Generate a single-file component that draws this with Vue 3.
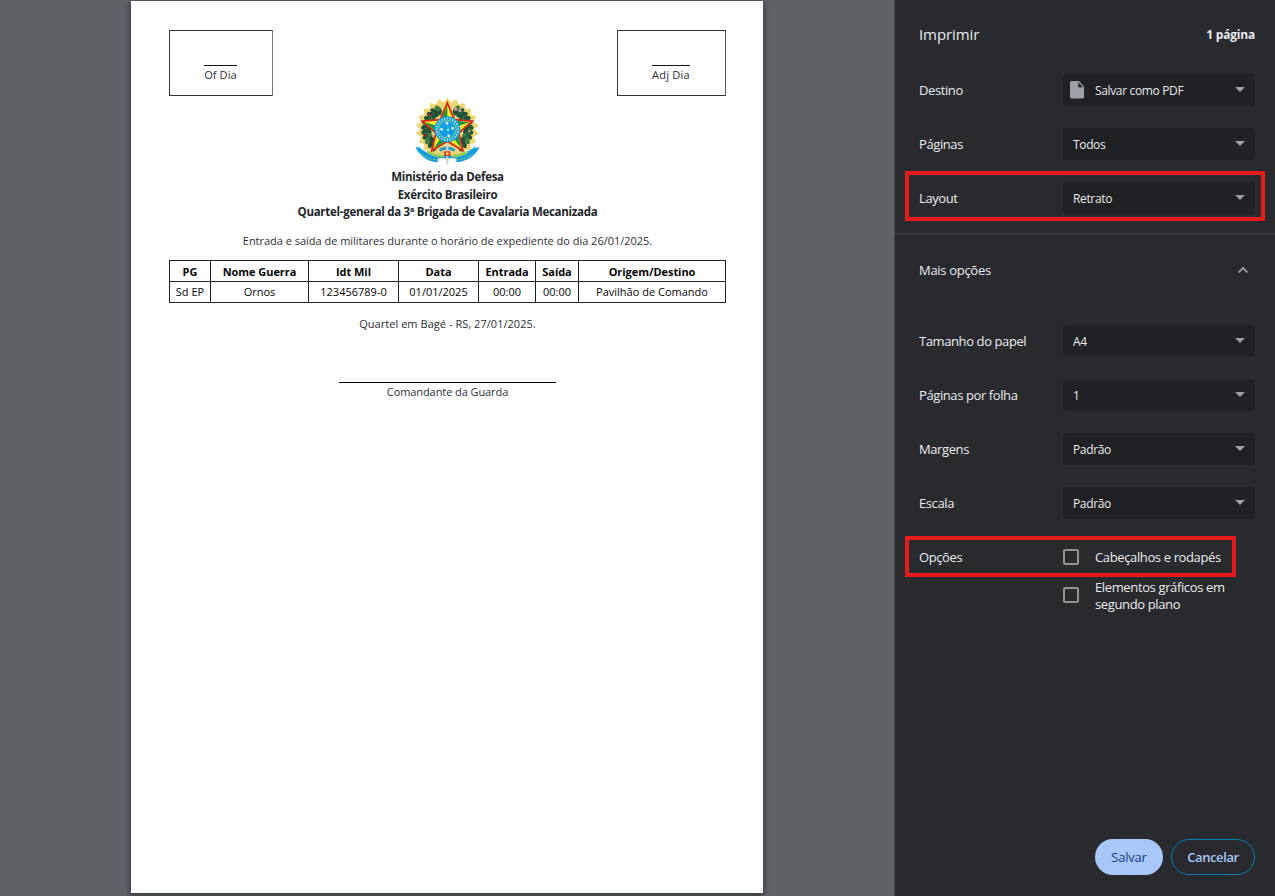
<script setup>
const topSettings = [
  { label: 'Destino', value: 'Salvar como PDF', icon: true },
  { label: 'Páginas', value: 'Todos' },
  { label: 'Layout', value: 'Retrato', marked: true },
]
const moreSettings = [
  { label: 'Tamanho do papel', value: 'A4' },
  { label: 'Páginas por folha', value: '1' },
  { label: 'Margens', value: 'Padrão' },
  { label: 'Escala', value: 'Padrão' },
]
const headers = ['PG', 'Nome Guerra', 'Idt Mil', 'Data', 'Entrada', 'Saída', 'Origem/Destino']
const cells = ['Sd EP', 'Ornos', '123456789-0', '01/01/2025', '00:00', '00:00', 'Pavilhão de Comando']

const point = (r, deg) => {
  const a = (deg * Math.PI) / 180
  return `${(130 + r * Math.sin(a)).toFixed(1)},${(115 - r * Math.cos(a)).toFixed(1)}`
}
const burst = Array.from({ length: 44 }, (_, i) => point(i % 2 ? 82 : 95, (i * 360) / 44)).join(' ')
const star = Array.from({ length: 10 }, (_, i) => point(i % 2 ? 36 : 79, i * 36)).join(' ')
const greenFacets = [0, 1, 2, 3, 4].map((i) => `130,115 ${point(70, i * 72)} ${point(33, i * 72 - 36)}`)
const leaves = []
for (let i = 0; i < 11; i++) {
  const a = 24 + i * 12
  for (const side of [-1, 1]) {
    for (const r of [57, 69]) {
      const t = (a * Math.PI) / 180
      leaves.push({
        x: 130 + side * r * Math.sin(t),
        y: 115 - r * Math.cos(t),
        rot: side * (a + (r === 57 ? -35 : 35)),
        light: (i + (r === 57 ? 1 : 0)) % 4 === 0,
      })
    }
  }
}
const dots = Array.from({ length: 24 }, (_, i) => point(32.5, i * 15).split(','))
</script>

<template>
  <div class="dialog">
    <main class="preview">
      <article class="page">
        <div class="stamps">
          <div class="stamp"><span class="stamp-line">Of Dia</span></div>
          <div class="stamp adj"><span class="stamp-line">Adj Dia</span></div>
        </div>
        <svg class="emblem" viewBox="30 18 204 204">
          <polygon :points="burst" fill="#f0d673" />
          <ellipse
            v-for="(l, i) in leaves" :key="i" :cx="l.x" :cy="l.y" rx="6.5" ry="10.5"
            :transform="`rotate(${l.rot} ${l.x} ${l.y})`"
            :fill="l.light ? '#3c7a42' : '#1b5238'"
          />
          <g fill="#8b2b3c">
            <circle cx="78" cy="71" r="5" /><circle cx="63" cy="132" r="5" /><circle cx="89" cy="162" r="4" />
          </g>
          <g fill="#c7a090">
            <circle cx="154" cy="53" r="6" /><circle cx="168" cy="59" r="5" /><circle cx="196" cy="120" r="4" />
          </g>
          <polygon :points="star" fill="#ffec1c" stroke="#d3271f" stroke-width="5.5" />
          <polygon v-for="(f, i) in greenFacets" :key="'g' + i" :points="f" fill="#159447" />
          <path d="M34 167 45 171 42 164C59 187 94 194 129 193C168 192 201 181 216 164L213 172 226 168C218 190 193 211 157 214L158 202H101L101 214C66 211 44 190 34 167Z" fill="#0d9de4" />
          <path d="M105 173Q129 160 154 173L151 182Q130 171 108 182Z" fill="#2d9ec9" />
          <path d="M127 156h6v65h-6z" fill="#cfd2d8" />
          <path d="M121 181h18v14h-18z" fill="#cf2b29" />
          <path d="M126 184h8v8h-8z" fill="#f8d43c" />
          <path d="M68 181Q94 196 119 195M141 195Q170 195 190 182" fill="none" stroke="#a8d55b" stroke-width="9" />
          <path d="M71 184Q94 197 119 197M141 197Q170 196 187 185" fill="none" stroke="#3a9c72" stroke-width="3" stroke-dasharray="3 3" />
          <path d="M50 185Q64 202 96 207M163 207Q190 202 207 187" fill="none" stroke="#9fd36c" stroke-width="3" stroke-dasharray="6 3" />
          <circle cx="130" cy="115" r="39" fill="#159fda" />
          <circle cx="130" cy="115" r="26.5" fill="#10a0e8" stroke="#9bcf80" stroke-width="3" />
          <circle v-for="(d, i) in dots" :key="'d' + i" :cx="d[0]" :cy="d[1]" r="2.4" fill="#e5f8ff" />
          <g fill="#fff">
            <circle cx="129" cy="97" r="3.8" /><circle cx="113" cy="115" r="3.8" />
            <circle cx="146" cy="112" r="3.8" /><circle cx="132" cy="116" r="3" /><circle cx="134" cy="134" r="3.8" />
          </g>
        </svg>
        <div class="heading">
          <div>Ministério da Defesa</div>
          <div>Exército Brasileiro</div>
          <div>Quartel-general da 3ª Brigada de Cavalaria Mecanizada</div>
        </div>
        <div class="intro">Entrada e saída de militares durante o horário de expediente do dia 26/01/2025.</div>
        <div class="grid">
          <div v-for="h in headers" :key="h" class="cell head">{{ h }}</div>
          <div v-for="(c, i) in cells" :key="i" class="cell">{{ c }}</div>
        </div>
        <div class="place">Quartel em Bagé - RS, 27/01/2025.</div>
        <div class="signature">Comandante da Guarda</div>
      </article>
    </main>

    <aside class="sidebar">
      <header class="top"><span class="title">Imprimir</span><span class="count">1 página</span></header>
      <section class="settings first">
        <div v-for="s in topSettings" :key="s.label" class="row" :class="{ marked: s.marked }">
          <span class="label">{{ s.label }}</span>
          <div class="select" :class="{ wide: s.icon }">
            <svg v-if="s.icon" class="file" viewBox="0 0 14 18">
              <path d="M2 0h7l5 5.500V16a1.600 1.600 0 0 1-1.600 1.600H1.600A1.600 1.600 0 0 1 0 16V1.600A1.600 1.600 0 0 1 1.600 0Z" fill="#9aa0a6" />
              <path d="M8.3 1.3v5h4.800Z" fill="#202124" />
            </svg>
            <span>{{ s.value }}</span>
            <svg class="arrow" viewBox="0 0 10 5"><path d="M0 0h10L5 5Z" fill="#9aa0a6" /></svg>
          </div>
        </div>
      </section>
      <div class="more">
        <span>Mais opções</span>
        <svg viewBox="0 0 12 8"><path d="M1.5 6.5 6 2l4.500 4.500" fill="none" stroke="#a1a5a9" stroke-width="1.6" /></svg>
      </div>
      <section class="settings">
        <div v-for="s in moreSettings" :key="s.label" class="row">
          <span class="label">{{ s.label }}</span>
          <div class="select">
            <span>{{ s.value }}</span>
            <svg class="arrow" viewBox="0 0 10 5"><path d="M0 0h10L5 5Z" fill="#9aa0a6" /></svg>
          </div>
        </div>
      </section>
      <div class="row options">
        <span class="label">Opções</span><i class="check"></i><span class="option">Cabeçalhos e rodapés</span>
      </div>
      <div class="row second">
        <i class="check"></i><span class="option">Elementos gráficos em<br />segundo plano</span>
      </div>
      <footer class="actions">
        <button class="save">Salvar</button>
        <button class="cancel">Cancelar</button>
      </footer>
    </aside>
  </div>
</template>

<style>
body { margin: 0; overflow: hidden; background: #292a2d; }
</style>

<style scoped>
*, *::after { box-sizing: border-box; }
.dialog { display: flex; width: 1275px; height: 896px; font-family: "Open Sans", "Noto Sans", sans-serif; white-space: nowrap; }
.preview { width: 895px; height: 896px; padding: 1px 0 0 131px; background: #5f6368; border-right: 1px solid #46494d; overflow: hidden; }
.page { width: 632px; height: 892px; padding: 29px 37px 0 38px; background: #fff; box-shadow: 0 2px 6px 1px rgba(25, 26, 32, .6); color: #2b2f34; font-size: 11px; line-height: 17px; display: flex; flex-direction: column; align-items: center; }
.stamps { width: 557px; display: flex; justify-content: space-between; }
.stamp { width: 104px; height: 66px; border: 1px solid #303136; border-right-color: #77787b; padding-top: 34px; display: flex; justify-content: center; align-items: flex-start; }
.stamp.adj { width: 109px; border-right-color: #55565a; }
.stamp-line { border-top: 1px solid #111; line-height: 17px; letter-spacing: .1px; margin-right: 1px; }
.adj .stamp-line { letter-spacing: .25px; }
.emblem { width: 68px; height: 68px; margin-top: 1px; flex: none; }
.heading { margin-top: 3px; text-align: center; font-size: 11.5px; font-weight: 700; line-height: 17.5px; letter-spacing: -.28px; color: #212529; }
.intro { padding-top: 11px; letter-spacing: -.02px; }
.grid { width: 557px; margin-top: 11px; display: grid; grid-template-columns: 41px 98px 90px 80px 57px 43px 147px; grid-template-rows: 21px 21px; border: solid #222328; border-width: 1px 0 0 1px; }
.cell { border: solid #222328; border-width: 0 1px 1px 0; text-align: center; color: #050505; line-height: 20px; letter-spacing: 0; }
.cell.head { font-weight: 700; line-height: 22px; letter-spacing: -.05px; }
.place { margin-top: 12px; letter-spacing: .04px; }
.signature { width: 217px; margin-top: 50px; border-top: 1px solid #000; text-align: center; line-height: 17px; letter-spacing: -.08px; }

.sidebar { width: 380px; height: 896px; background: #292a2d; color: #e8eaed; font-size: 13px; display: flex; flex-direction: column; }
.top { height: 74px; padding: 0 20px 5px 24px; display: flex; align-items: center; justify-content: space-between; }
.title { font-size: 15px; letter-spacing: -.1px; margin-top: -2px; }
.count { font-size: 12px; font-weight: 700; letter-spacing: -.2px; }
.settings { display: flex; flex-direction: column; gap: 22px; }
.settings.first { height: 160px; border-bottom: 1px solid #414347; }
.row { height: 32px; padding: 0 20px 0 24px; display: flex; align-items: center; flex: none; position: relative; }
.label { width: 144px; letter-spacing: -.4px; }
.select { width: 192px; height: 32px; padding: 0 10px; border-radius: 4px; background: #202124; display: flex; align-items: center; font-size: 12px; letter-spacing: -.35px; }
.select.wide { padding-left: 7px; }
.file { width: 14px; height: 18px; margin-right: 11px; }
.arrow { width: 10px; height: 5px; margin: -2px 0 0 auto; }
.marked::after, .options::after { content: ""; position: absolute; left: 10px; top: -11px; width: 360px; height: 50px; border: 4px solid #e6191b; }
.more { height: 91px; padding: 0 26px 19px 24px; display: flex; justify-content: space-between; align-items: center; letter-spacing: -.3px; }
.more svg { width: 12px; height: 8px; }
.more span { margin-top: -1px; }
.options { margin-top: 22px; }
.options::after { top: -5px; width: 331px; height: 41px; }
.check { width: 16px; height: 16px; margin-right: 16px; border: 2px solid #929292; border-radius: 2px; }
.option { line-height: 17px; letter-spacing: -.37px; }
.second { margin-top: 6px; height: 32px; padding-left: 168px; }
.second .option { padding-top: 2px; }
.actions { margin-top: auto; padding: 0 20px 21px; display: flex; justify-content: flex-end; gap: 8px; }
button { height: 36px; padding: 0; border-radius: 18px; font: 13px "Open Sans", sans-serif; letter-spacing: -.2px; }
.save { width: 68px; border: 0; background: #a8c7fa; color: #123d7c; }
.cancel { width: 84px; border: 1px solid #047db7; background: transparent; color: #a8c7fa; font-weight: 600; letter-spacing: -.42px; }
</style>
